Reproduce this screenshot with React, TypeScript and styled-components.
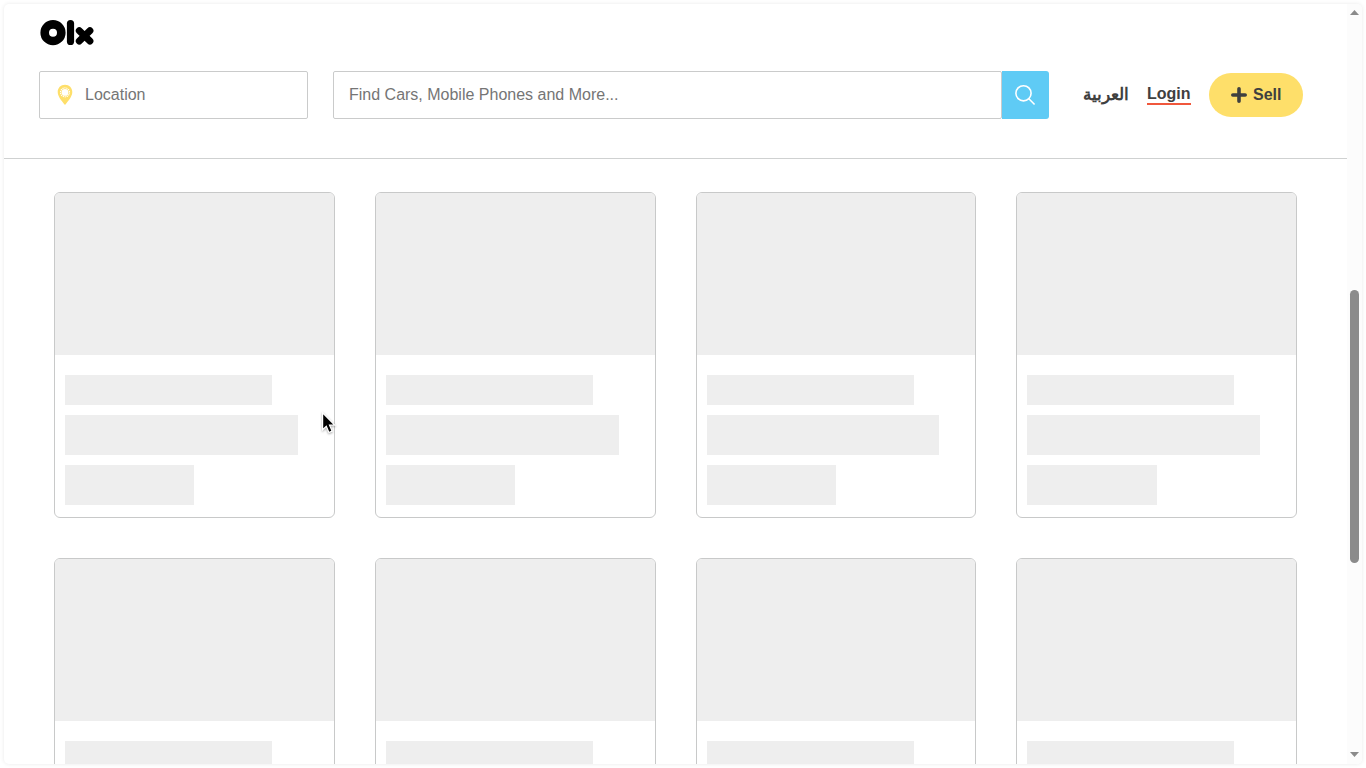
import React from 'react';
import styled, { createGlobalStyle } from 'styled-components';

const GlobalStyle = createGlobalStyle`
  * { box-sizing: border-box; }
  body {
    margin: 0;
    padding: 4px;
    height: 768px;
    overflow: hidden;
    background: #fff;
    font-family: "Liberation Sans", Arial, sans-serif;
    font-size: 16px;
    color: #3f403f;
  }
`;

const Window = styled.div`
  width: 1358px;
  height: 760px;
  display: flex;
  overflow: hidden;
  border-radius: 5px;
  background: #fff;
  box-shadow: 0 0 4px rgba(0, 0, 0, 0.09);
`;

const Page = styled.div`
  width: 1343px;
  height: 760px;
  overflow: hidden;
`;

const Header = styled.header`
  height: 155px;
  padding: 15px 44px 0 35px;
  border-bottom: 1px solid #cfd1d1;
`;

const Logo = styled.svg`
  display: block;
  width: 57px;
  height: 28px;
`;

const Toolbar = styled.div`
  display: flex;
  align-items: center;
  height: 48px;
  margin-top: 24px;
`;

const Field = styled.div<{ $width: number; $inset: number }>`
  display: flex;
  align-items: center;
  flex: none;
  width: ${(p) => p.$width}px;
  height: 48px;
  padding-left: ${(p) => p.$inset}px;
  padding-bottom: 1px;
  border: 1px solid #cacbcb;
  border-radius: 2px;
  color: #757575;
`;

const Pin = styled.svg`
  width: 16px;
  height: 22px;
  margin: 1px 12px 0 0;
`;

const SearchGroup = styled.div`
  display: flex;
  margin-left: 25px;
`;

const SearchButton = styled.button`
  display: block;
  width: 47px;
  height: 48px;
  padding: 0;
  border: 0;
  border-radius: 0 3px 3px 0;
  background: #5fcbf5;
`;

const SearchIcon = styled.svg`
  display: block;
  width: 22px;
  height: 22px;
  margin-left: 12px;
`;

const Language = styled.a`
  width: 46px;
  margin-left: 34px;
  font-family: "Liberation Sans", sans-serif;
  font-size: 17px;
  font-weight: 700;
  line-height: 20px;
  white-space: nowrap;
`;

const Login = styled.a`
  height: 21px;
  margin: -1px 0 0 18px;
  border-bottom: 2px solid #f0573c;
  font-weight: 700;
  line-height: 20px;
`;

const Sell = styled.button`
  display: flex;
  align-items: center;
  width: 94px;
  height: 44px;
  margin-left: 18px;
  padding: 0 0 1px 22px;
  border: 0;
  border-radius: 22px;
  background: #fedf6a;
  color: #3f403f;
  font: 700 16px "Liberation Sans", Arial, sans-serif;
`;

const Plus = styled.svg`
  width: 16px;
  height: 16px;
  margin: 1px 6.5px 0 0;
`;

const Listings = styled.main`
  display: grid;
  grid-template-columns: repeat(4, 1fr);
  gap: 40px;
  padding: 33px 50px 0;
`;

const Card = styled.article`
  height: 326px;
  overflow: hidden;
  border: 1px solid #c8c9c9;
  border-radius: 6px;
`;

const Photo = styled.div`
  height: 162px;
  background: #eee;
`;

const Details = styled.div`
  display: flex;
  flex-direction: column;
  gap: 10px;
  padding: 20px 10px 0;
`;

const Line = styled.div<{ $width: number; $height: number }>`
  width: ${(p) => p.$width}%;
  height: ${(p) => p.$height}px;
  background: #eee;
`;

const Scrollbar = styled.div`
  display: flex;
  flex-direction: column;
  align-items: center;
  width: 15px;
  height: 760px;
  padding: 6px 0 7px;
  background: #fcfcfc;
`;

const Arrow = styled.svg`
  display: block;
  width: 9px;
  height: 5px;
`;

const Thumb = styled.div`
  width: 9px;
  height: 273px;
  margin: 275px 0 auto;
  border-radius: 5px;
  background: #8b8b8b;
`;

const Cursor = styled.svg`
  position: absolute;
  left: 320px;
  top: 411px;
  width: 18px;
  height: 26px;
  filter: drop-shadow(0 1px 1px rgba(0, 0, 0, 0.35));
`;

const cards = Array.from({ length: 8 }, (_, index) => index);

export default function App() {
  return (
    <>
      <GlobalStyle />
      <Window>
        <Page>
          <Header>
            <Logo viewBox="0 0 57 28" fill="none" stroke="#000" strokeLinecap="round">
              <circle cx="14" cy="13.7" r="8.3" strokeWidth="8.6" />
              <path d="M31.5 4.6v17.8" strokeWidth="7.2" />
              <path d="M40.3 11.7l10.6 10.3M50.9 11.7l-10.6 10.3" strokeWidth="7" />
            </Logo>
            <Toolbar>
              <Field $width={269} $inset={17}>
                <Pin viewBox="0 0 16 22">
                  <path d="M8 .8C3.7.8.7 4 .7 8.1.7 12.6 4.6 17 8 21c3.4-4 7.3-8.4 7.3-12.9C15.3 4 12.3.8 8 .8z" fill="#fedf6a" />
                  <circle cx="8" cy="8.4" r="4.5" fill="none" stroke="#fff" strokeWidth="1.1" strokeDasharray="1.2 .8" />
                  <circle cx="8" cy="8.4" r="3.4" fill="#fff" />
                </Pin>
                Location
              </Field>
              <SearchGroup>
                <Field $width={669} $inset={15}>Find Cars, Mobile Phones and More...</Field>
                <SearchButton aria-label="Search">
                  <SearchIcon viewBox="0 0 22 22" fill="none" stroke="#fff" strokeWidth="1.6">
                    <circle cx="9.5" cy="9.3" r="7.6" />
                    <path d="M14.9 14.8l5.7 5.7" />
                  </SearchIcon>
                </SearchButton>
              </SearchGroup>
              <Language lang="ar">العربية</Language>
              <Login>Login</Login>
              <Sell>
                <Plus viewBox="0 0 16 16" stroke="#3f403f" strokeWidth="3.6" strokeLinecap="round">
                  <path d="M8 1.8v12.4M1.8 8h12.4" />
                </Plus>
                Sell
              </Sell>
            </Toolbar>
          </Header>
          <Listings>
            {cards.map((card) => (
              <Card key={card}>
                <Photo />
                <Details>
                  <Line $width={80} $height={30} />
                  <Line $width={90} $height={40} />
                  <Line $width={50} $height={40} />
                </Details>
              </Card>
            ))}
          </Listings>
        </Page>
        <Scrollbar>
          <Arrow viewBox="0 0 9 5"><path d="M0 5L4.5 0 9 5z" fill="#8b8b8b" /></Arrow>
          <Thumb />
          <Arrow viewBox="0 0 9 5"><path d="M0 0l4.5 5L9 0z" fill="#8b8b8b" /></Arrow>
        </Scrollbar>
      </Window>
      <Cursor viewBox="0 0 18 26">
        <path d="M2.6 1.8v17l3.7-3.5 2.6 6.2 3.2-1.4-2.6-5.9h5.2z" fill="#000" stroke="#fff" strokeWidth="1.2" />
      </Cursor>
    </>
  );
}
